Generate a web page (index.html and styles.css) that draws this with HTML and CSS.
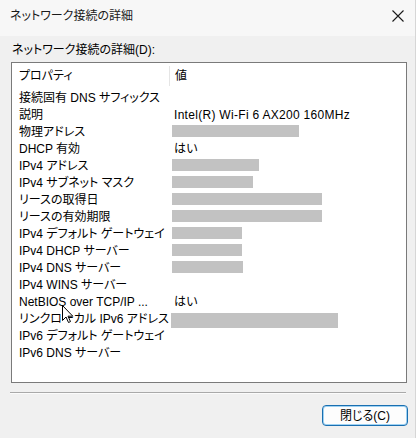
FILE: index.html
```html
<!DOCTYPE html>
<html lang="ja">
<head>
<meta charset="utf-8">
<title>ネットワーク接続の詳細</title>
<link rel="stylesheet" href="styles.css">
</head>
<body>
<div class="window">
  <div class="titlebar">
    <span class="title">ネットワーク接続の詳細</span>
    <svg class="close" width="12" height="12" viewBox="0 0 12 12"><path d="M0.5 0.5 L11.5 11.5 M11.5 0.5 L0.5 11.5" stroke="#1a1a1a" stroke-width="1.1" fill="none"/></svg>
  </div>
  <div class="content">
    <div class="label">ネットワーク接続の詳細(D):</div>
    <div class="listbox">
      <div class="header">
        <div class="hcell">プロパティ</div>
        <div class="hcell hval">値</div>
      </div>
      <div class="rows">
        <div class="prop">接続固有 DNS サフィックス</div><div class="val"></div>
        <div class="prop">説明</div><div class="val">Intel(R) Wi-Fi 6 AX200 160MHz</div>
        <div class="prop">物理アドレス</div><div class="val"><span class="mask" style="width:127px"></span></div>
        <div class="prop">DHCP 有効</div><div class="val">はい</div>
        <div class="prop">IPv4 アドレス</div><div class="val"><span class="mask" style="width:87px"></span></div>
        <div class="prop">IPv4 サブネット マスク</div><div class="val"><span class="mask" style="width:81px"></span></div>
        <div class="prop">リースの取得日</div><div class="val"><span class="mask" style="width:150px"></span></div>
        <div class="prop">リースの有効期限</div><div class="val"><span class="mask" style="width:150px"></span></div>
        <div class="prop">IPv4 デフォルト ゲートウェイ</div><div class="val"><span class="mask" style="width:70px"></span></div>
        <div class="prop">IPv4 DHCP サーバー</div><div class="val"><span class="mask" style="width:70px"></span></div>
        <div class="prop">IPv4 DNS サーバー</div><div class="val"><span class="mask" style="width:71px"></span></div>
        <div class="prop">IPv4 WINS サーバー</div><div class="val"></div>
        <div class="prop">NetBIOS over TCP/IP ...</div><div class="val">はい</div>
        <div class="prop">リンクローカル IPv6 アドレス</div><div class="val"><span class="mask tall" style="width:167px"></span></div>
        <div class="prop">IPv6 デフォルト ゲートウェイ</div><div class="val"></div>
        <div class="prop">IPv6 DNS サーバー</div><div class="val"></div>
      </div>
    </div>
    <div class="separator"></div>
    <div class="footer">
      <button class="btn">閉じる(C)</button>
    </div>
  </div>
  <svg class="cursor" width="12" height="19" viewBox="0 0 12 19"><path d="M0.5 0.5 L0.5 15.5 L4 12 L6.5 17.5 L8.5 16.6 L6 11.2 L10.8 11.2 Z" fill="#fff" stroke="#000" stroke-width="1" stroke-linejoin="miter"/></svg>
</div>
</body>
</html>
```
FILE: styles.css
```css
html, body {
  margin: 0;
  padding: 0;
}
body {
  background: #ffffff;
  font-family: "Liberation Sans", "Noto Sans CJK JP", sans-serif;
  font-size: 12px;
  color: #000;
  font-feature-settings: "palt";
}
.window {
  position: relative;
  width: 415px;
  height: 438px;
  background: #f0f0f0;
  border-right: 1px solid #d6d6d6;
}
.titlebar {
  height: 36px;
  background: #f7f7f7;
  display: flex;
  align-items: flex-start;
  justify-content: space-between;
  padding: 0 11px 0 10px;
  box-sizing: border-box;
}
.title {
  margin-top: 8px;
  line-height: 16px;
  font-size: 12px;
  color: #1a1a1a;
}
.close {
  margin-top: 10px;
}
.content {
  padding: 7px 0 0 11px;
}
.label {
  line-height: 14px;
  height: 14px;
  padding-left: 1px;
  margin-bottom: 5px;
}
.listbox {
  width: 396px;
  height: 321px;
  box-sizing: border-box;
  border: 1px solid #7a7a7a;
  background: #fff;
}
.header {
  display: grid;
  grid-template-columns: 157px 1fr;
  height: 26px;
  align-items: center;
}
.hcell {
  padding-left: 7px;
  line-height: 16px;
}
.hval {
  border-left: 1px solid #e5e5e5;
  padding-left: 5px;
  height: 20px;
  line-height: 20px;
}
.rows {
  display: grid;
  grid-template-columns: 157px 1fr;
  grid-auto-rows: 17px;
  align-items: center;
  padding-top: 1px;
}
.prop {
  padding-left: 7px;
  line-height: 17px;
  white-space: nowrap;
}
.val {
  padding-left: 5px;
  line-height: 17px;
  white-space: nowrap;
  display: flex;
  align-items: center;
  height: 17px;
  letter-spacing: 0.3px;
}
.mask {
  display: block;
  height: 12px;
  background: #c2c2c2;
  margin-left: -2px;
  margin-top: -3px;
}
.mask.tall {
  height: 15px;
  margin-left: -3px;
  margin-top: 1px;
}
.separator {
  width: 396px;
  margin-top: 9px;
  margin-left: -1px;
  border-top: 1px solid #a9a9a9;
  border-bottom: 1px solid #fbfbfb;
}
.footer {
  display: flex;
  justify-content: flex-end;
  width: 397px;
  margin-top: 11px;
}
.btn {
  width: 86px;
  height: 21px;
  box-sizing: border-box;
  border: 1px solid #1a6fb0;
  border-radius: 4px;
  box-shadow: inset 0 0 0 1px #9fd2f3;
  background: #fdfdfd;
  font-family: inherit;
  font-size: 12px;
  font-feature-settings: "palt";
  color: #000;
  padding: 0;
  line-height: 18px;
}
.cursor {
  position: absolute;
  left: 62px;
  top: 305px;
}
```
